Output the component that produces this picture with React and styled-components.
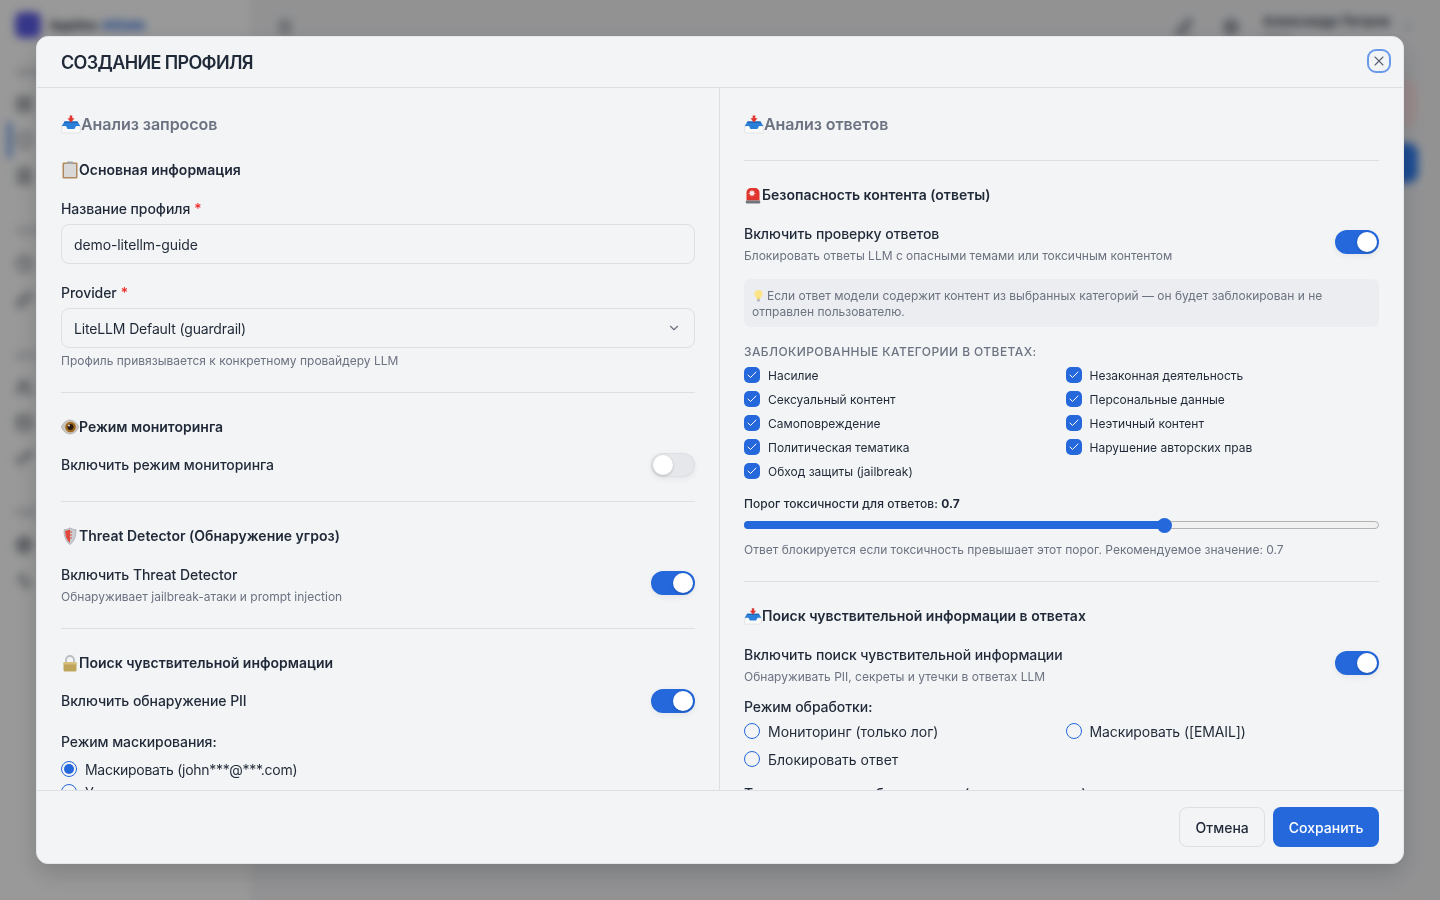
import React from 'react';
import styled, { createGlobalStyle } from 'styled-components';
import { ChevronDown, X, Check, PenLine, Settings, Menu, LayoutGrid, Shield, FileText, Clock, Link, Users, Database, Key, Activity, Globe } from 'lucide-react';

const GlobalStyle = createGlobalStyle`
  html, body {
    margin: 0;
    height: 100%;
    overflow: hidden;
    background: #f3f4f6;
    font-family: Inter, 'Noto Sans', sans-serif;
  }
  * { box-sizing: border-box; }
`;

const ACCENT = '#2468dc';

/* page behind the modal */
const Page = styled.div`
  display: flex;
  height: 900px;
  background: #f3f4f6;
`;

const Sidebar = styled.aside`
  width: 250px;
  flex-shrink: 0;
  background: #fff;
  padding: 12px 12px;
  color: #4b5563;
`;

const Brand = styled.div`
  display: flex;
  align-items: center;
  gap: 8px;
  margin-left: 3px;
  font-size: 13px;
  font-weight: 700;
  color: #374151;
  span { color: #2468dc; }
`;

const BrandMark = styled.div`
  width: 26px;
  height: 26px;
  border-radius: 7px;
  background: #5b5be6;
`;

const NavCaption = styled.div`
  font-size: 10px;
  line-height: 12px;
  color: #9ca3af;
  margin: ${(p) => p.$mt ?? 31}px 0 ${(p) => p.$mb ?? 9}px 3px;
`;

const NavRow = styled.div`
  height: ${(p) => p.$h || 36}px;
  display: flex;
  align-items: center;
  margin-left: -4px;
  padding-left: 4px;
  border-left: 3px solid ${(p) => (p.$active ? '#2468dc' : 'transparent')};
`;

const MainArea = styled.main`
  flex: 1;
  min-width: 0;
`;

const TopBar = styled.div`
  height: 54px;
  display: flex;
  align-items: center;
  gap: 23px;
  padding: 0 26px;
  color: #374151;
`;

const TopSpacer = styled.div`
  flex: 1;
`;

const TopIcons = styled.div`
  display: flex;
  align-items: center;
  gap: 29px;
`;

const UserMenu = styled.div`
  display: flex;
  align-items: center;
  gap: 12px;
`;

const UserName = styled.div`
  font-size: 13.5px;
  line-height: 18px;
  font-weight: 600;
  text-align: right;
`;

const UserRole = styled.div`
  font-size: 10px;
  line-height: 12px;
  font-weight: 400;
  color: #9ca3af;
`;

const BehindActions = styled.div`
  display: flex;
  flex-direction: column;
  align-items: flex-end;
  gap: 17px;
  margin: 26px 22px 0 0;
`;

const BehindBox = styled.div`
  width: 120px;
  height: ${(p) => p.$h}px;
  border-radius: 10px;
  background: ${(p) => p.$bg};
`;

/* modal */
const Overlay = styled.div`
  position: fixed;
  inset: 0;
  display: flex;
  align-items: center;
  justify-content: center;
  background: rgba(0, 0, 0, 0.4);
  backdrop-filter: blur(4px);
`;

const Modal = styled.div`
  width: 1368px;
  height: 828px;
  display: flex;
  flex-direction: column;
  background: #f3f4f6;
  border: 1px solid #e5e7eb;
  border-radius: 12px;
  box-shadow: 0 10px 24px rgba(0, 0, 0, 0.16);
  overflow: hidden;
  color: #1f2937;
`;

const ModalHeader = styled.header`
  height: 51px;
  flex-shrink: 0;
  display: flex;
  align-items: center;
  justify-content: space-between;
  padding: 0 12px 0 24px;
  border-bottom: 1px solid #dcdfe4;
`;

const ModalTitle = styled.h2`
  margin: 1px 0 0;
  font-size: 18px;
  line-height: 28px;
  font-weight: 600;
  letter-spacing: -0.65px;
  color: #1f2937;
`;

const CloseButton = styled.button`
  width: 24px;
  height: 24px;
  margin-top: -2px;
  padding: 0;
  display: flex;
  align-items: center;
  justify-content: center;
  background: transparent;
  color: #5b6270;
  border: 2px solid #6a9be8;
  border-radius: 9px;
`;

const ModalBody = styled.div`
  flex: 1;
  min-height: 0;
  display: grid;
  grid-template-columns: 683px 1fr;
`;

const Column = styled.div`
  min-height: 0;
  overflow: hidden;
  padding: 24px 24px 0;
  border-right: ${(p) => (p.$divided ? '1px solid #dcdfe4' : 'none')};
`;

const ModalFooter = styled.footer`
  height: 73px;
  flex-shrink: 0;
  display: flex;
  align-items: center;
  justify-content: flex-end;
  gap: 8px;
  padding: 0 24px;
  border-top: 1px solid #dcdfe4;
`;

const Button = styled.button`
  height: 40px;
  padding: 0 15.5px;
  font-family: inherit;
  font-size: 14px;
  font-weight: 500;
  border-radius: 8px;
  color: ${(p) => (p.$primary ? '#fff' : '#1f2937')};
  background: ${(p) => (p.$primary ? ACCENT : 'transparent')};
  border: ${(p) => (p.$primary ? 'none' : '1px solid #dcdfe4')};
`;

/* text */
const PaneTitle = styled.h3`
  display: flex;
  align-items: center;
  margin: 0;
  font-size: 16px;
  line-height: 24px;
  font-weight: 600;
  letter-spacing: -0.05px;
  color: #6b7280;
`;

const SectionTitle = styled.h4`
  display: flex;
  align-items: center;
  margin: ${(p) => p.$mt || 0}px 0 0;
  font-size: 14px;
  line-height: 20px;
  font-weight: 600;
  color: #1f2937;
`;

const FieldLabel = styled.div`
  font-size: 14px;
  line-height: 20px;
  font-weight: 500;
  letter-spacing: -0.06px;
  color: #1f2937;
  margin-top: ${(p) => p.$mt || 0}px;
`;

const Required = styled.span`
  color: #ef2b2b;
  margin-left: 4px;
`;

const Hint = styled.div`
  font-size: 12px;
  line-height: 16px;
  color: #6b7280;
  margin-top: ${(p) => p.$mt ?? 5}px;
`;

const Divider = styled.hr`
  border: 0;
  border-top: 1px solid #dcdfe4;
  margin: ${(p) => p.$top}px 0 ${(p) => p.$bottom}px;
`;

/* controls */
const TextInput = styled.input`
  display: block;
  width: 100%;
  height: 40px;
  margin-top: 5px;
  padding: 0 12px;
  font-family: inherit;
  font-size: 14px;
  letter-spacing: -0.11px;
  color: #1f2937;
  background: #f3f4f6;
  border: 1px solid #dcdfe4;
  border-radius: 8px;
  outline: none;
`;

const SelectBox = styled.div`
  height: 40px;
  margin-top: 5px;
  padding: 0 13px 0 12px;
  display: flex;
  align-items: center;
  justify-content: space-between;
  font-size: 14px;
  letter-spacing: -0.15px;
  color: #1f2937;
  border: 1px solid #dcdfe4;
  border-radius: 8px;
  svg { color: #6b7280; }
`;

const SwitchRow = styled.div`
  display: flex;
  align-items: center;
  justify-content: space-between;
  margin-top: ${(p) => p.$mt || 0}px;
  > :last-child {
    margin-bottom: ${(p) => (p.$lift ? '4px' : '0')};
  }
`;

const SwitchTrack = styled.div`
  width: 44px;
  height: 24px;
  flex-shrink: 0;
  padding: 2px;
  display: flex;
  justify-content: ${(p) => (p.$on ? 'flex-end' : 'flex-start')};
  border-radius: 12px;
  background: ${(p) => (p.$on ? ACCENT : '#e5e7eb')};
  box-shadow: ${(p) => (p.$on ? '0 0 0 0 transparent' : 'inset 0 0 0 1px #dcdfe4')}, 0 2px 6px rgba(0, 0, 0, 0.06);
`;

const SwitchKnob = styled.div`
  width: 20px;
  height: 20px;
  border-radius: 50%;
  background: #fff;
  box-shadow: 0 1px 3px rgba(0, 0, 0, 0.2);
`;

const RadioRow = styled.div`
  display: flex;
  align-items: center;
  gap: 8px;
  height: 20px;
  font-size: 14px;
  letter-spacing: ${(p) => p.$spacing || 0}px;
  color: #1f2937;
  margin-top: ${(p) => p.$mt || 0}px;
`;

const RadioDot = styled.span`
  width: 16px;
  height: 16px;
  flex-shrink: 0;
  display: flex;
  align-items: center;
  justify-content: center;
  border-radius: 50%;
  border: 1.5px solid ${ACCENT};
  &::after {
    content: '';
    width: 10px;
    height: 10px;
    border-radius: 50%;
    background: ${(p) => (p.$checked ? ACCENT : 'transparent')};
  }
`;

const Notice = styled.div`
  margin-top: 15px;
  padding: 9px 8px 7px;
  font-size: 12px;
  line-height: 16px;
  color: #6b7280;
  background: #ebedf1;
  border-radius: 6px;
`;

const CapsLabel = styled.div`
  margin-top: 17px;
  font-size: 12px;
  line-height: 16px;
  font-weight: 500;
  letter-spacing: 0.42px;
  text-transform: uppercase;
  color: #6b7280;
`;

const OptionGrid = styled.div`
  display: grid;
  grid-template-columns: 1fr 1fr;
  column-gap: 8px;
  row-gap: ${(p) => p.$gap}px;
  margin-top: ${(p) => p.$mt}px;
`;

const CheckRow = styled.div`
  display: flex;
  align-items: center;
  gap: 8px;
  height: 16px;
  font-size: 12px;
  color: #1f2937;
`;

const CheckMark = styled.span`
  width: 16px;
  height: 16px;
  flex-shrink: 0;
  display: flex;
  align-items: center;
  justify-content: center;
  background: ${ACCENT};
  border-radius: 5px;
  color: #fff;
`;

const SliderLabel = styled.div`
  margin-top: 17px;
  font-size: 12px;
  line-height: 16px;
  font-weight: 500;
  letter-spacing: 0.05px;
  color: #1f2937;
  b { font-weight: 700; }
`;

const SliderTrack = styled.div`
  position: relative;
  height: 8px;
  margin-top: 9px;
  background: #f1f1f1;
  border: 1px solid #b2b2b2;
  border-radius: 4px;
`;

const SliderFill = styled.div`
  position: absolute;
  left: -1px;
  top: -1px;
  bottom: -1px;
  background: ${ACCENT};
  border-radius: 4px 0 0 4px;
`;

const SliderThumb = styled.div`
  position: absolute;
  top: 50%;
  width: 15px;
  height: 15px;
  margin: -7.5px 0 0 -7.5px;
  border-radius: 50%;
  background: ${ACCENT};
`;

const EmojiBox = styled.span`
  display: inline-flex;
  flex-shrink: 0;
  width: ${(p) => p.$size}px;
  height: ${(p) => p.$size}px;
  svg { width: 100%; height: 100%; display: block; }
`;

const InlineEmoji = styled(EmojiBox)`
  vertical-align: -2px;
  margin-right: 2px;
`;

const InboxArt = () => (
  <svg viewBox="0 0 20 20">
    <path d="M.7 12h18.6v6a1 1 0 0 1-1 1H1.7a1 1 0 0 1-1-1z" fill="#fafafa" stroke="#d5d6d8" strokeWidth=".6" />
    <path d="M.7 12 3.5 7.5h13L19.3 12H15l-1.5 3h-7L5 12z" fill="#2a7fd8" />
    <path d="M3.5 7.5h13l.7 1.2H2.8z" fill="#1b5fb0" />
    <path d="M8.7 1.5h2.6v2.8h2.2L10 8.4 6.5 4.3h2.2z" fill="#e0352f" />
  </svg>
);

const ClipboardArt = () => (
  <svg viewBox="0 0 18 18">
    <rect x="1.5" y="1.5" width="15" height="16" rx="1.2" fill="#b08a5e" />
    <rect x="3" y="3" width="12" height="13" fill="#d8d8d8" />
    <rect x="6" y=".5" width="6" height="2.6" rx=".6" fill="#a3a3a3" />
  </svg>
);

const EyeArt = () => (
  <svg viewBox="0 0 18 18">
    <path d="M.2 9C2.5 4 6 2 9 2s6.5 2 8.8 7c-2.3 5-5.800 7-8.800 7S2.5 14 .2 9z" fill="#cbc5bf" stroke="#9f9891" strokeWidth=".5" />
    <circle cx="9.5" cy="9" r="5.3" fill="#a0681d" />
    <circle cx="9.5" cy="9" r="3" fill="#2b1a12" />
    <circle cx="8" cy="7.4" r=".9" fill="#fff" />
  </svg>
);

const ShieldArt = () => (
  <svg viewBox="0 0 18 18">
    <path d="M9 .8c2 1.3 3.8 1.8 6 1.9 0 6.5-1.5 11.6-6 14.7C4.5 14.3 3 9.2 3 2.7c2.2-.1 4-.6 6-1.900z" fill="#c9ccd0" stroke="#8b8f94" strokeWidth=".5" />
    <path d="M9 2.2v13.500C5.5 13 4.3 8.8 4.2 3.7 6 3.6 7.5 3.2 9 2.2z" fill="#e0483c" />
    <path d="M9 5h2M9 8h2M9 11h2" stroke="#e0483c" strokeWidth="1" />
  </svg>
);

const LockArt = () => (
  <svg viewBox="0 0 18 18">
    <path d="M5 9V6a4 4 0 0 1 8 0v3" fill="none" stroke="#b9bcc0" strokeWidth="1.8" />
    <rect x="2.5" y="8" width="13" height="9.5" rx="1.5" fill="#bfa45c" />
    <rect x="2.5" y="8" width="13" height="2.5" rx="1" fill="#d6c07c" />
  </svg>
);

const SirenArt = () => (
  <svg viewBox="0 0 18 18">
    <path d="M2.5 14.5V6.5A4.5 4.5 0 0 1 7 2h4a4.5 4.5 0 0 1 4.5 4.5v8z" fill="#e0352f" />
    <path d="M8 3.5 8.7 5.4 10.5 4.7 9.8 6.5l1.9.7-1.9.7.7 1.800L8.7 9 8 10.900 7.3 9l-1.800.7.7-1.800-1.900-.7 1.900-.7-.7-1.800 1.800.7z" fill="#fff" opacity=".9" />
    <rect x="1.8" y="14.5" width="14.4" height="3" rx="1" fill="#70757c" />
  </svg>
);

const BulbArt = () => (
  <svg viewBox="0 0 14 14">
    <circle cx="7" cy="5.5" r="4.5" fill="#fbe48a" />
    <path d="M5 9.5h4L8.6 11H5.4z" fill="#f6d463" />
    <rect x="5.3" y="11" width="3.4" height="2.5" rx=".8" fill="#b4b7bb" />
  </svg>
);

const responseCategories = [
  'Насилие',
  'Незаконная деятельность',
  'Сексуальный контент',
  'Персональные данные',
  'Самоповреждение',
  'Неэтичный контент',
  'Политическая тематика',
  'Нарушение авторских прав',
  'Обход защиты (jailbreak)',
];

const Switch = ({ on }) => (
  <SwitchTrack $on={on}>
    <SwitchKnob />
  </SwitchTrack>
);

const Radio = ({ checked, spacing, children, mt }) => (
  <RadioRow $mt={mt} $spacing={spacing}>
    <RadioDot $checked={checked} />
    {children}
  </RadioRow>
);

const App = () => (
  <>
    <GlobalStyle />
    <Page>
      <Sidebar>
        <Brand>
          <BrandMark />
          <div>
            AppSec <span>AIGate</span>
          </div>
        </Brand>
        <NavCaption $mt={28} $mb={8}>ОБЗОР</NavCaption>
        <NavRow><LayoutGrid size={18} /></NavRow>
        <NavRow $active><Shield size={18} /></NavRow>
        <NavRow><FileText size={18} /></NavRow>
        <NavCaption>ЛОГИ</NavCaption>
        <NavRow><Clock size={18} /></NavRow>
        <NavRow><Link size={18} /></NavRow>
        <NavCaption>ДОСТУП</NavCaption>
        <NavRow $h={35}><Users size={18} /></NavRow>
        <NavRow $h={35}><Database size={18} /></NavRow>
        <NavRow $h={35}><Key size={18} /></NavRow>
        <NavCaption>ЕЩЁ</NavCaption>
        <NavRow><Globe size={18} /></NavRow>
        <NavRow><Activity size={18} /></NavRow>
      </Sidebar>
      <MainArea>
        <TopBar>
          <Menu size={18} />
          <TopSpacer />
          <TopIcons>
            <PenLine size={18} />
            <Settings size={18} />
          </TopIcons>
          <UserMenu>
            <div>
              <UserName>Александр Петров</UserName>
              <UserRole>admin</UserRole>
            </div>
            <ChevronDown size={12} />
          </UserMenu>
        </TopBar>
        <BehindActions>
          <BehindBox $h={46} $bg="#fee8e8" />
          <BehindBox $h={40} $bg="#2f7ff5" />
        </BehindActions>
      </MainArea>
    </Page>

    <Overlay>
      <Modal>
        <ModalHeader>
          <ModalTitle>СОЗДАНИЕ ПРОФИЛЯ</ModalTitle>
          <CloseButton aria-label="close">
            <X size={16} strokeWidth={1.6} />
          </CloseButton>
        </ModalHeader>

        <ModalBody>
          <Column $divided>
            <PaneTitle>
              <EmojiBox $size={20}><InboxArt /></EmojiBox>
              Анализ запросов
            </PaneTitle>

            <SectionTitle $mt={24}>
              <EmojiBox $size={18}><ClipboardArt /></EmojiBox>
              Основная информация
            </SectionTitle>
            <FieldLabel $mt={19}>
              Название профиля<Required>*</Required>
            </FieldLabel>
            <TextInput defaultValue="demo-litellm-guide" />
            <FieldLabel $mt={19}>
              Provider<Required>*</Required>
            </FieldLabel>
            <SelectBox>
              LiteLLM Default (guardrail)
              <ChevronDown size={14} />
            </SelectBox>
            <Hint>Профиль привязывается к конкретному провайдеру LLM</Hint>
            <Divider $top={23} $bottom={24} />

            <SectionTitle>
              <EmojiBox $size={18}><EyeArt /></EmojiBox>
              Режим мониторинга
            </SectionTitle>
            <SwitchRow $mt={16}>
              <FieldLabel>Включить режим мониторинга</FieldLabel>
              <Switch />
            </SwitchRow>
            <Divider $top={24} $bottom={24} />

            <SectionTitle>
              <EmojiBox $size={18}><ShieldArt /></EmojiBox>
              Threat Detector (Обнаружение угроз)
            </SectionTitle>
            <SwitchRow $mt={19} $lift>
              <div>
                <FieldLabel>Включить Threat Detector</FieldLabel>
                <Hint $mt={4}>Обнаруживает jailbreak-атаки и prompt injection</Hint>
              </div>
              <Switch on />
            </SwitchRow>
            <Divider $top={23} $bottom={24} />

            <SectionTitle>
              <EmojiBox $size={18}><LockArt /></EmojiBox>
              Поиск чувствительной информации
            </SectionTitle>
            <SwitchRow $mt={16}>
              <FieldLabel>Включить обнаружение PII</FieldLabel>
              <Switch on />
            </SwitchRow>
            <FieldLabel $mt={19}>Режим маскирования:</FieldLabel>
            <Radio checked spacing={-0.28} mt={7}>Маскировать (john***@***.com)</Radio>
            <Radio mt={3}>Удалить</Radio>
          </Column>

          <Column>
            <PaneTitle>
              <EmojiBox $size={20}><InboxArt /></EmojiBox>
              Анализ ответов
            </PaneTitle>
            <Divider $top={24} $bottom={24} />

            <SectionTitle>
              <EmojiBox $size={18}><SirenArt /></EmojiBox>
              Безопасность контента (ответы)
            </SectionTitle>
            <SwitchRow $mt={19} $lift>
              <div>
                <FieldLabel>Включить проверку ответов</FieldLabel>
                <Hint $mt={4}>Блокировать ответы LLM с опасными темами или токсичным контентом</Hint>
              </div>
              <Switch on />
            </SwitchRow>

            <Notice>
              <InlineEmoji $size={13}><BulbArt /></InlineEmoji>
              Если ответ модели содержит контент из выбранных категорий — он будет заблокирован и не отправлен пользователю.
            </Notice>

            <CapsLabel>Заблокированные категории в ответах:</CapsLabel>
            <OptionGrid $gap={8} $mt={7}>
              {responseCategories.map((name) => (
                <CheckRow key={name}>
                  <CheckMark>
                    <Check size={12} strokeWidth={2} />
                  </CheckMark>
                  {name}
                </CheckRow>
              ))}
            </OptionGrid>

            <SliderLabel>
              Порог токсичности для ответов: <b>0.7</b>
            </SliderLabel>
            <SliderTrack>
              <SliderFill style={{ width: '66.2%' }} />
              <SliderThumb style={{ left: '66.2%' }} />
            </SliderTrack>
            <Hint $mt={13}>Ответ блокируется если токсичность превышает этот порог. Рекомендуемое значение: 0.7</Hint>
            <Divider $top={23} $bottom={24} />

            <SectionTitle>
              <EmojiBox $size={18}><InboxArt /></EmojiBox>
              Поиск чувствительной информации в ответах
            </SectionTitle>
            <SwitchRow $mt={19} $lift>
              <div>
                <FieldLabel>Включить поиск чувствительной информации</FieldLabel>
                <Hint $mt={4}>Обнаруживать PII, секреты и утечки в ответах LLM</Hint>
              </div>
              <Switch on />
            </SwitchRow>
            <FieldLabel $mt={12}>Режим обработки:</FieldLabel>
            <OptionGrid $gap={8} $mt={4}>
              <Radio>Мониторинг (только лог)</Radio>
              <Radio spacing={-0.1}>Маскировать ([EMAIL])</Radio>
              <Radio>Блокировать ответ</Radio>
            </OptionGrid>
            <FieldLabel $mt={15}>Типы данных для обнаружения (для маскировки)</FieldLabel>
          </Column>
        </ModalBody>

        <ModalFooter>
          <Button>Отмена</Button>
          <Button $primary>Сохранить</Button>
        </ModalFooter>
      </Modal>
    </Overlay>
  </>
);

export default App;
